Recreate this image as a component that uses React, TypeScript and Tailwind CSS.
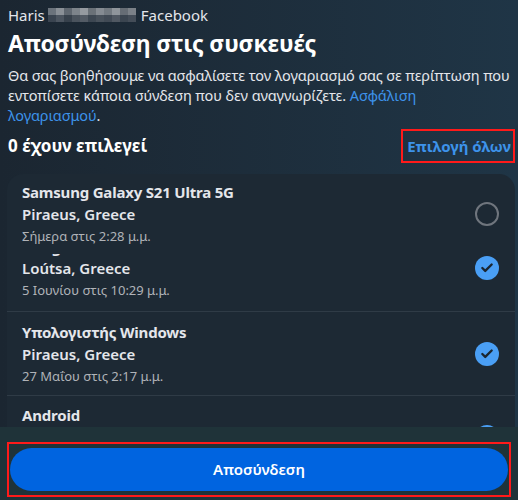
import { Check } from "lucide-react"

interface Device {
  name: string
  place: string
  time: string
  checked: boolean
}

const devices: Device[] = [
  { name: "Samsung Galaxy S21 Ultra 5G", place: "Piraeus, Greece", time: "Σήμερα στις 2:28 μ.μ.", checked: false },
  { name: "Google Pixel 7 Pro", place: "Loútsa, Greece", time: "5 Ιουνίου στις 10:29 μ.μ.", checked: true },
  { name: "Υπολογιστής Windows", place: "Piraeus, Greece", time: "27 Μαΐου στις 2:17 μ.μ.", checked: true },
  { name: "Android", place: "Piraeus, Greece", time: "", checked: true },
]

// blurred surname, drawn as a pixel mosaic
const mosaic = [
  ["#6b737c", "#8a9097", "#5f6770", "#7d848b", "#959aa0", "#6a7178", "#858b92", "#737a81", "#8f959b", "#666d75", "#7b8188"],
  ["#3a4450", "#4c5560", "#37414c", "#4a535d", "#535b65", "#3d4752", "#48515b", "#414a55", "#505862", "#3b4550", "#444d58"],
]

function Mark({ checked }: { checked: boolean }) {
  if (!checked) {
    return <div className="h-6 w-6 shrink-0 rounded-full border-2 border-[#6f757d]" />
  }
  return (
    <div className="flex h-6 w-6 shrink-0 items-center justify-center rounded-full bg-[#4a9ff5]">
      <Check className="h-3.5 w-3.5 text-[#1b2630]" strokeWidth={4} />
    </div>
  )
}

function DeviceRow({ device, hiddenTitle }: { device: Device; hiddenTitle?: boolean }) {
  return (
    <div className="pl-[15px] pr-4">
      {hiddenTitle ? (
        <div className="mt-[8px] h-[2px] overflow-hidden">
          <div className="-mt-[17px] text-[15px] leading-5 font-bold text-[#e4e6eb]">{device.name}</div>
        </div>
      ) : (
        <div className="text-[15px] leading-5 font-bold tracking-[-0.2px] text-[#e4e6eb]">{device.name}</div>
      )}
      <div className="flex items-center justify-between">
        <span className="text-[15px] leading-[22px] font-semibold text-[#e4e6eb]">{device.place}</span>
        <Mark checked={device.checked} />
      </div>
      {device.time && <div className="text-[13px] leading-5 text-[#b0b3b8]">{device.time}</div>}
    </div>
  )
}

export default function App() {
  return (
    <div
      className="flex h-[500px] w-[518px] flex-col overflow-hidden bg-gradient-to-r from-[#1b2631] to-[#1f3546] text-[#e4e6eb]"
      style={{ fontFamily: '"Noto Sans", "Open Sans", sans-serif' }}
    >
      <div className="px-2 pt-[5px]">
        <div className="flex items-center text-[15px] leading-5">
          <span>Haris</span>
          <div className="ml-[3px] mr-[5px] flex flex-col">
            {mosaic.map((row, r) => (
              <div key={r} className="flex">
                {row.map((c, i) => (
                  <div key={i} className="h-[7px] w-[8px]" style={{ backgroundColor: c }} />
                ))}
              </div>
            ))}
          </div>
          <span>Facebook</span>
        </div>
        <h1 className="mt-[3px] text-[23px] leading-[30px] font-bold tracking-[-0.2px] text-white">
          Αποσύνδεση στις συσκευές
        </h1>
        <p className="-mr-[6px] mt-[7px] text-[14.5px] leading-5 tracking-[-0.1px] text-[#e4e6eb]">
          Θα σας βοηθήσουμε να ασφαλίσετε τον λογαριασμό σας σε περίπτωση που εντοπίσετε κάποια σύνδεση που δεν
          αναγνωρίζετε. <span className="text-[#3d93ea]">Ασφάλιση<br />λογαριασμού</span>.
        </p>
        <div className="mt-[4px] flex items-center justify-between">
          <span className="text-[17px] font-bold text-white">0 έχουν επιλεγεί</span>
          <div className="-mr-[5px] flex h-[34px] items-center border-2 border-[#ff1a1a] pl-[4px] pr-[2px]">
            <span className="text-[15px] font-bold text-[#3d93ea]">Επιλογή όλων</span>
          </div>
        </div>
      </div>

      <div className="mt-[11px] ml-[7px] mr-[3px] h-[253px] overflow-hidden rounded-t-2xl bg-[#1d2934]">
        <div className="pt-2">
          <DeviceRow device={devices[0]} />
          <div className="pb-[11px]">
            <DeviceRow device={devices[1]} hiddenTitle />
          </div>
          <div className="border-t border-[#2f3b46] pt-[10px] pb-[9px]">
            <DeviceRow device={devices[2]} />
          </div>
          <div className="border-t border-[#2f3b46] pt-[9px]">
            <DeviceRow device={devices[3]} />
          </div>
        </div>
      </div>

      <div className="flex-1 bg-[#1f3339] px-[7px] pt-[15px]">
        <div className="border-2 border-[#ff1a1a] px-[1px] py-[4px]">
          <button className="flex h-[43px] w-full items-center justify-center rounded-full bg-[#0064e0] text-[15px] font-semibold text-white">
            Αποσύνδεση
          </button>
        </div>
      </div>
    </div>
  )
}
